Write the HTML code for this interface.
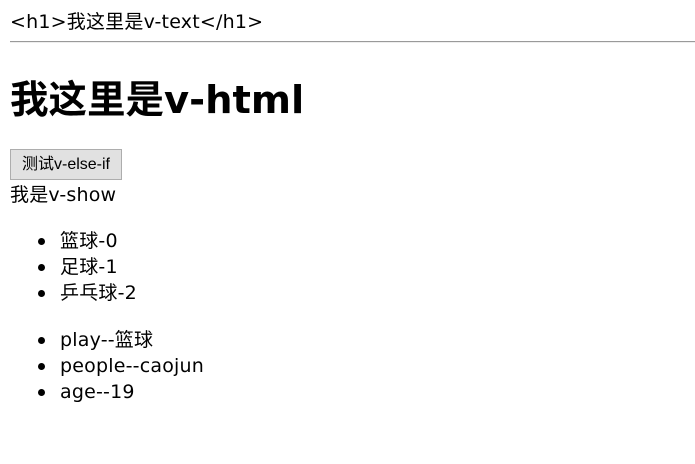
<!DOCTYPE html>
<html><head><meta charset="utf-8"><style>
body{margin:0;width:695px;height:464px;background:#fff;color:#000;font-family:"DejaVu Sans","Noto Sans CJK SC",sans-serif;font-size:19px;position:relative;overflow:hidden}
.a{position:absolute;white-space:nowrap;line-height:26px;letter-spacing:0.2px}
.hr{position:absolute;left:10px;top:41px;width:685px;height:1px;background:#9a9a9a;border-bottom:1px solid #eee}
h1{position:absolute;left:10px;top:75px;margin:0;font-size:38.5px;line-height:52px;font-weight:bold;white-space:nowrap}
.btn{position:absolute;left:10px;top:149px;width:110px;height:29px;border:1px solid #adadad;background:#e1e1e1;font-family:"Liberation Sans","Noto Sans CJK SC",sans-serif;font-size:16px;line-height:29px;text-align:center;white-space:nowrap}
.li{position:absolute;left:60px;line-height:26px;white-space:nowrap;letter-spacing:0.2px}
.li:before{content:"";position:absolute;left:-22px;top:10px;width:7px;height:7px;border-radius:50%;background:#000}
</style></head><body>
<div class="a" style="left:10px;top:9px">&lt;h1&gt;我这里是v-text&lt;/h1&gt;</div>
<div class="hr"></div>
<h1>我这里是v-html</h1>
<div class="btn">测试v-else-if</div>
<div class="a" style="left:10px;top:182px">我是v-show</div>
<div class="li" style="top:228px">篮球-0</div>
<div class="li" style="top:254px">足球-1</div>
<div class="li" style="top:280px">乒乓球-2</div>
<div class="li" style="top:327px">play--篮球</div>
<div class="li" style="top:353px">people--caojun</div>
<div class="li" style="top:379px">age--19</div>
</body></html>
